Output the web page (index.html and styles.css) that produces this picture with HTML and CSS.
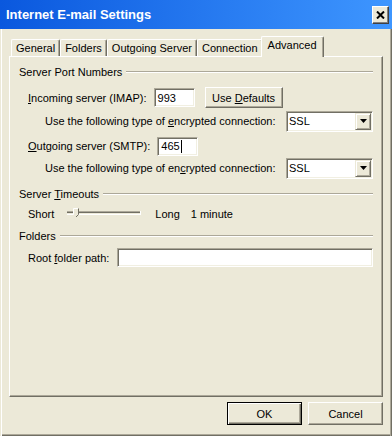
FILE: index.html
```html
<!DOCTYPE html>
<html lang="en">
<head>
  <meta charset="UTF-8" />
  <title>Internet E-mail Settings</title>
  <link rel="stylesheet" href="styles.css">
</head>
<body>
  <div class="window">
    <div class="titlebar">
      <span class="title">Internet E-mail Settings</span>
      <button class="close-btn">
        <svg width="9" height="8" viewBox="0 0 9 8">
          <path d="M1 0.5 L8 7.5 M8 0.5 L1 7.5" stroke="#000" stroke-width="2" fill="none" />
        </svg>
      </button>
    </div>

    <div class="client">
      <div class="tabs">
        <div class="tab">General</div>
        <div class="tab">Folders</div>
        <div class="tab">Outgoing Server</div>
        <div class="tab">Connection</div>
        <div class="tab active">Advanced</div>
      </div>

      <div class="pane">
        <div class="group-title"><span>Server Port Numbers</span></div>

        <div class="row row-incoming">
          <span class="label"><u>I</u>ncoming server (IMAP):</span>
          <div class="input port">993</div>
          <button class="btn btn-defaults">Use <u>D</u>efaults</button>
        </div>

        <div class="row row-enc">
          <span class="label">Use the following type of <u>e</u>ncrypted connection:</span>
          <div class="select">
            <span>SSL</span>
            <span class="select-arrow">
              <svg width="7" height="4" viewBox="0 0 7 4"><path d="M0 0 H7 L3.5 4 Z" fill="#000" /></svg>
            </span>
          </div>
        </div>

        <div class="row row-outgoing">
          <span class="label"><u>O</u>utgoing server (SMTP):</span>
          <div class="input port">465<span class="caret"></span></div>
        </div>

        <div class="row row-enc row-enc2">
          <span class="label">Use the following type of en<u>c</u>rypted connection:</span>
          <div class="select">
            <span>SSL</span>
            <span class="select-arrow">
              <svg width="7" height="4" viewBox="0 0 7 4"><path d="M0 0 H7 L3.5 4 Z" fill="#000" /></svg>
            </span>
          </div>
        </div>

        <div class="group-title group-timeouts"><span>Server <u>T</u>imeouts</span></div>

        <div class="row row-slider">
          <span class="label">Short</span>
          <svg class="slider" width="74" height="12" viewBox="0 0 74 12">
            <rect x="0" y="3" width="74" height="1" fill="#ACA899" />
            <rect x="0" y="4" width="73" height="1" fill="#716F64" />
            <rect x="0" y="6" width="74" height="1" fill="#FFFFFF" />
            <rect x="73" y="3" width="1" height="4" fill="#FFFFFF" />
            <path d="M6.5 0.5 H11.5 V6.5 L9 9 L6.5 6.5 Z" fill="#ECE9D8" />
            <path d="M6.5 6.5 V0.5 H11" stroke="#FFFFFF" stroke-width="1" fill="none" />
            <path d="M11.5 0.5 V6.5 L9 9" stroke="#716F64" stroke-width="1" fill="none" />
          </svg>
          <span class="label long">Long</span>
          <span class="label minute">1 minute</span>
        </div>

        <div class="group-title group-folders"><span>Folders</span></div>

        <div class="row row-root">
          <span class="label">Root <u>f</u>older path:</span>
          <div class="input path"></div>
        </div>
      </div>

      <div class="footer">
        <button class="btn btn-default">OK</button>
        <button class="btn">Cancel</button>
      </div>
    </div>
  </div>
</body>
</html>
```

FILE: styles.css
```css
* {
  box-sizing: border-box;
}

html, body {
  margin: 0;
  background: #fff;
}

body {
  font-family: 'Liberation Sans', Arial, sans-serif;
  font-size: 11px;
  color: #000;
}

.window {
  width: 392px;
  height: 436px;
  display: flex;
  flex-direction: column;
  background: #ECE9D8;
}

.titlebar {
  height: 29px;
  flex: none;
  display: flex;
  align-items: center;
  padding: 0 3px 0 6px;
  background: linear-gradient(to right, #0A58DE, #3E96FF);
  color: #fff;
  font-size: 13px;
  font-weight: bold;
}

.title {
  flex: 1;
}

.close-btn {
  width: 17px;
  height: 18px;
  margin-top: 1px;
  padding: 0;
  display: flex;
  align-items: center;
  justify-content: center;
  background: #ECE9D8;
  border: 1px solid;
  border-color: #fff #404040 #404040 #fff;
  box-shadow: inset -1px -1px #808080;
}

.client {
  flex: 1;
  display: flex;
  flex-direction: column;
  padding: 7px 9px 0;
  box-shadow: inset 1px 0 #ECE9D8, inset 2px 0 #fff,
    inset -1px 0 #716F64, inset -2px 0 #ACA899,
    inset 0 -1px #716F64, inset 0 -2px #ACA899;
}

/* tabs */
.tabs {
  display: flex;
  align-items: flex-end;
  height: 20px;
  padding-left: 2px;
}

.tab {
  height: 17px;
  padding: 1px 4px 0;
  border: 1px solid;
  border-color: #fff #716F64 transparent #fff;
  border-bottom: none;
  border-radius: 2px 2px 0 0;
  box-shadow: inset -1px 0 #ACA899;
  line-height: 14px;
  white-space: nowrap;
}

.tab.active {
  position: relative;
  z-index: 1;
  height: 21px;
  margin: 0 -2px -1px;
  padding: 1px 6px 0;
  background: #ECE9D8;
}

.pane {
  height: 341px;
  flex: none;
  padding: 8px 9px 0;
  border: 1px solid;
  border-color: #fff #716F64 #716F64 #fff;
  box-shadow: inset -1px -1px #ACA899;
}

/* group titles with etched line */
.group-title {
  display: flex;
  align-items: center;
  height: 14px;
  gap: 4px;
  white-space: nowrap;
}

.group-title::after {
  content: "";
  flex: 1;
  border-top: 1px solid #ACA899;
  border-bottom: 1px solid #fff;
}

.group-timeouts { margin-top: 9px; }
.group-folders { margin-top: 8px; }

.row {
  display: flex;
  align-items: center;
  height: 20px;
  padding-left: 9px;
  white-space: nowrap;
}

.row-incoming { margin-top: 8px; height: 21px; }
.row-enc { margin-top: 3px; padding-left: 26px; }
.row-outgoing { margin-top: 5px; }
.row-enc2 { margin-top: 2px; }
.row-slider { margin-top: 6px; height: 14px; }
.row-root { margin-top: 5px; height: 19px; }

.input {
  height: 19px;
  display: flex;
  align-items: center;
  padding-left: 3px;
  background: #fff;
  border: 1px solid;
  border-color: #ACA899 #fff #fff #ACA899;
  box-shadow: inset 1px 1px #716F64, inset -1px -1px #F1EFE2;
}

.port {
  width: 41px;
  margin-left: 7px;
}

.path {
  flex: 1;
  margin-left: 8px;
}

.caret {
  width: 1px;
  height: 13px;
  margin-left: 1px;
  background: #000;
}

.btn {
  width: 75px;
  height: 23px;
  padding: 0;
  font: inherit;
  color: #000;
  background: #ECE9D8;
  border: 1px solid;
  border-color: #fff #716F64 #716F64 #fff;
  box-shadow: inset -1px -1px #ACA899;
}

.btn-defaults {
  width: 78px;
  height: 21px;
  margin-left: 10px;
}

.btn-default {
  border-color: #000;
  box-shadow: inset 1px 1px #fff, inset -1px -1px #716F64, inset -2px -2px #ACA899;
}

/* combo box */
.select {
  width: 87px;
  height: 21px;
  margin-left: auto;
  display: flex;
  align-items: center;
  padding-left: 2px;
  background: #fff;
  border: 1px solid;
  border-color: #ACA899 #fff #fff #ACA899;
  box-shadow: inset 1px 1px #716F64, inset -1px -1px #F1EFE2;
}

.select-arrow {
  width: 16px;
  height: 17px;
  margin-left: auto;
  margin-right: 1px;
  display: flex;
  align-items: center;
  justify-content: center;
  background: #ECE9D8;
  border: 1px solid;
  border-color: #ECE9D8 #716F64 #716F64 #ECE9D8;
  box-shadow: inset 1px 1px #fff, inset -1px -1px #ACA899;
}

.slider {
  margin-left: 13px;
}

.long { margin-left: 14px; }
.minute { margin-left: 11px; }

.footer {
  display: flex;
  justify-content: flex-end;
  gap: 6px;
  margin-top: 5px;
}
```
